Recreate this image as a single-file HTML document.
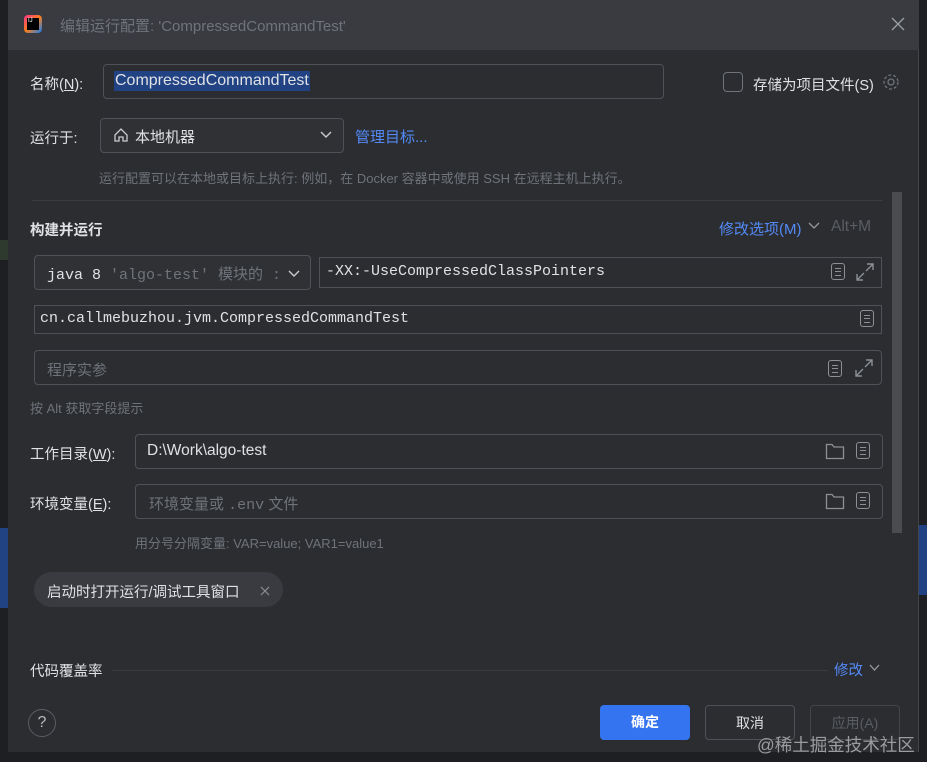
<!DOCTYPE html>
<html><head><meta charset="utf-8"><style>
*{margin:0;padding:0;box-sizing:border-box}
body{width:927px;height:762px;background:#1e1f22;position:relative;overflow:hidden;font-family:"Liberation Sans","Noto Sans CJK SC",sans-serif;color:#dfe1e5;font-size:14px}
.a{position:absolute}
.dlg{left:8px;top:0;width:911px;height:752px;background:#2b2d30;border-right:1px solid #43454a}
.tb{left:8px;top:0;width:911px;height:50px;background:#393b40}
.in{position:absolute;border:1px solid #4e5157;border-radius:4px;background:#2b2d30}
.mono{font-family:"Liberation Mono","Noto Sans CJK SC",monospace}
.hint{color:#6f737a;font-size:13px}
.lbl{font-size:14.5px;color:#dfe1e5}
.ic{position:absolute;width:14px;height:17px;border:1.5px solid #8c8f94;border-radius:3px}
.ic:before{content:"";position:absolute;left:3px;right:3px;top:4px;height:6px;border-top:1.5px solid #8c8f94;border-bottom:1.5px solid #8c8f94}
.ic:after{content:"";position:absolute;left:3px;right:3px;top:7px;border-top:1.5px solid #8c8f94}
.btn{position:absolute;top:705px;width:90px;height:35px;border-radius:4px;font-size:14px;text-align:center;line-height:35px}
</style></head><body>
<div class="a" style="left:0;top:240px;width:8px;height:20px;background:#2d3a2d"></div>
<div class="a" style="left:0;top:528px;width:8px;height:80px;background:#214283"></div>
<div class="a" style="left:919px;top:525px;width:8px;height:70px;background:#214283"></div>
<div class="a dlg"></div>
<div class="a tb"></div>
<div class="a" style="left:24px;top:15px;width:18px;height:18px;border-radius:4px;background:linear-gradient(135deg,#ff318c,#fc801d 50%,#087cfa)"><div style="position:absolute;left:3px;top:3px;width:12px;height:12px;background:#000;color:#fff;font-size:6px;line-height:7px;padding-left:1px">IJ</div></div>
<div class="a" style="left:60px;top:15px;font-size:15px;color:#6f737a">编辑运行配置: 'CompressedCommandTest'</div>
<svg class="a" style="left:891px;top:17px" width="14" height="14"><path d="M1 1L13 13M13 1L1 13" stroke="#9a9da2" stroke-width="1.3"/></svg>

<div class="a lbl" style="left:30px;top:73px">名称(<u>N</u>):</div>
<div class="in" style="left:103px;top:64px;width:561px;height:35px"><span class="a" style="left:10px;top:6px;background:#214283;font-size:16px;padding:0 1px;line-height:20px">CompressedCommandTest</span></div>
<div class="a" style="left:723px;top:72px;width:20px;height:20px;border:1.5px solid #6f737a;border-radius:4px"></div>
<div class="a lbl" style="left:753px;top:74px">存储为项目文件(S)</div>
<svg class="a" style="left:881px;top:72px" width="20" height="20"><circle cx="10" cy="10" r="3" fill="none" stroke="#6f737a" stroke-width="1.3"/><circle cx="10" cy="10" r="7" fill="none" stroke="#6f737a" stroke-width="1.3" stroke-dasharray="3 2"/></svg>

<div class="a lbl" style="left:30px;top:127px">运行于:</div>
<div class="in" style="left:100px;top:118px;width:244px;height:35px;background:#2f3134"></div>
<svg class="a" style="left:113px;top:127px" width="16" height="16"><path d="M2 8L8 2L14 8V14H10V10H6V14H2Z" fill="none" stroke="#ccc" stroke-width="1.3"/></svg>
<div class="a" style="left:135px;top:126px;font-size:15px">本地机器</div>
<svg class="a" style="left:320px;top:131px" width="12" height="8"><path d="M1 1L6 6L11 1" fill="none" stroke="#ccc" stroke-width="1.4"/></svg>
<div class="a" style="left:355px;top:126px;color:#548af7;font-size:15px">管理目标...</div>
<div class="a hint" style="left:99px;top:168px">运行配置可以在本地或目标上执行: 例如，在 Docker 容器中或使用 SSH 在远程主机上执行。</div>
<div class="a" style="left:32px;top:200px;width:851px;height:1px;background:#393b40"></div>
<div class="a" style="left:892px;top:192px;width:10px;height:341px;background:#4a4c50"></div>

<div class="a" style="left:30px;top:219px;font-weight:bold;font-size:14.5px">构建并运行</div>
<div class="a" style="left:719px;top:218px;color:#548af7;font-size:15px">修改选项(M)</div>
<svg class="a" style="left:808px;top:222px" width="12" height="8"><path d="M1 1L6 6L11 1" fill="none" stroke="#999" stroke-width="1.3"/></svg>
<div class="a" style="left:831px;top:218px;color:#5a5d63;font-size:15.5px">Alt+M</div>

<div class="in" style="left:34px;top:255px;width:277px;height:35px;background:#2f3134"></div>
<div class="a mono" style="left:47px;top:263px;font-size:15px;white-space:nowrap"><span>java 8</span> <span style="color:#6f737a">'algo-test' 模块的 :</span></div>
<svg class="a" style="left:288px;top:270px" width="12" height="8"><path d="M1 1L6 6L11 1" fill="none" stroke="#ccc" stroke-width="1.4"/></svg>
<div class="in" style="left:319px;top:257px;width:563px;height:31px;border-radius:0"></div>
<div class="a mono" style="left:326px;top:263px;font-size:15px">-XX:-UseCompressedClassPointers</div>
<div class="ic" style="left:831px;top:263px"></div>
<svg class="a" style="left:855px;top:262px" width="20" height="20"><path d="M12 2H18V8M18 2L11 9M8 18H2V12M2 18L9 11" fill="none" stroke="#8c8f94" stroke-width="1.4"/></svg>

<div class="in" style="left:34px;top:305px;width:848px;height:29px;border-radius:0"></div>
<div class="a mono" style="left:40px;top:310px;font-size:15px">cn.callmebuzhou.jvm.CompressedCommandTest</div>
<div class="ic" style="left:860px;top:310px"></div>

<div class="in" style="left:34px;top:350px;width:848px;height:35px"></div>
<div class="a" style="left:47px;top:359px;font-size:15px;color:#6f737a">程序实参</div>
<div class="ic" style="left:828px;top:360px"></div>
<svg class="a" style="left:854px;top:358px" width="20" height="20"><path d="M12 2H18V8M18 2L11 9M8 18H2V12M2 18L9 11" fill="none" stroke="#8c8f94" stroke-width="1.4"/></svg>
<div class="a hint" style="left:30px;top:398px">按 Alt 获取字段提示</div>

<div class="a lbl" style="left:30px;top:443px">工作目录(<u>W</u>):</div>
<div class="in" style="left:135px;top:434px;width:748px;height:35px"></div>
<div class="a" style="left:147px;top:442px;font-size:15.5px">D:\Work\algo-test</div>
<svg class="a" style="left:825px;top:442px" width="20" height="18"><path d="M1.5 2.5H7L9 5H18.5V16.5H1.5Z" fill="none" stroke="#8c8f94" stroke-width="1.3"/></svg>
<div class="ic" style="left:856px;top:442px"></div>

<div class="a lbl" style="left:30px;top:493px">环境变量(<u>E</u>):</div>
<div class="in" style="left:135px;top:484px;width:748px;height:35px"></div>
<div class="a" style="left:149px;top:493px;font-size:15px;color:#6f737a">环境变量或 <span class="mono">.env</span> 文件</div>
<svg class="a" style="left:825px;top:492px" width="20" height="18"><path d="M1.5 2.5H7L9 5H18.5V16.5H1.5Z" fill="none" stroke="#8c8f94" stroke-width="1.3"/></svg>
<div class="ic" style="left:856px;top:492px"></div>
<div class="a hint" style="left:135px;top:533px">用分号分隔变量: VAR=value; VAR1=value1</div>

<div class="a" style="left:34px;top:572px;width:249px;height:35px;border-radius:18px;background:#393b40"></div>
<div class="a" style="left:47px;top:581px;font-size:14.5px">启动时打开运行/调试工具窗口</div>
<svg class="a" style="left:260px;top:586px" width="10" height="10"><path d="M1 1L9 9M9 1L1 9" stroke="#8c8f94" stroke-width="1.2"/></svg>

<div class="a lbl" style="left:30px;top:660px">代码覆盖率</div>
<div class="a" style="left:112px;top:670px;width:716px;height:1px;background:#393b40"></div>
<div class="a" style="left:834px;top:659px;color:#548af7;font-size:14.5px">修改</div>
<svg class="a" style="left:869px;top:664px" width="11" height="8"><path d="M1 1L5.5 6L10 1" fill="none" stroke="#999" stroke-width="1.3"/></svg>

<div class="a" style="left:28px;top:709px;width:28px;height:28px;border:1.5px solid #5a5d63;border-radius:50%;text-align:center;line-height:25px;font-size:16px;color:#bbb">?</div>
<div class="btn" style="left:600px;background:#3574f0;color:#fff;font-weight:bold">确定</div>
<div class="btn" style="left:705px;border:1px solid #4e5157">取消</div>
<div class="btn" style="left:810px;border:1px solid #43454a;color:#5a5d63">应用(A)</div>
<div class="a" style="left:757px;top:732px;font-size:17.5px;color:#9a9ca0">@稀土掘金技术社区</div>
</body></html>
